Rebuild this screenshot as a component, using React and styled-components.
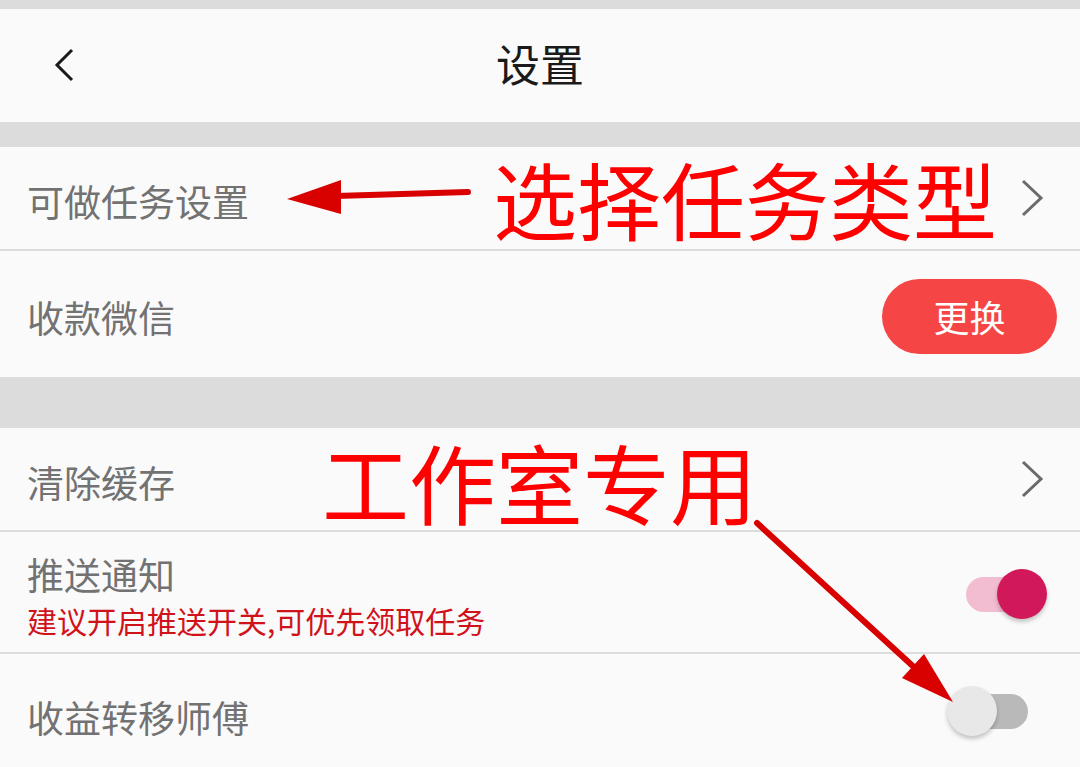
import React from 'react'
import styled, { createGlobalStyle, css } from 'styled-components'

const GlobalStyle = createGlobalStyle`
  html, body {
    margin: 0;
    padding: 0;
    background: #dcdcdc;
  }
  body {
    font-family: "Noto Sans CJK SC", "Noto Sans", sans-serif;
    overflow: hidden;
  }
`

const Page = styled.div`
  position: relative;
  width: 1080px;
  height: 767px;
  overflow: hidden;
  background: #dcdcdc;
  padding-top: 9px;
  box-sizing: border-box;
`
const Header = styled.div`
  height: 113px;
  background: #fafafa;
  display: flex;
  align-items: center;
  justify-content: center;
  position: relative;
`
const BackButton = styled.div`
  position: absolute;
  left: 52px;
  top: 38px;
  width: 26px;
  height: 36px;
`
const Title = styled.div`
  font-size: 44px;
  color: #1a1a1a;
  line-height: 1;
  margin-top: -6px;
`
const Gap = styled.div`
  height: ${props => props.h}px;
`
const Group = styled.div`
  background: #fafafa;
  display: flex;
  flex-direction: column;
`
const Row = styled.div`
  height: ${props => props.h}px;
  display: flex;
  align-items: center;
  justify-content: space-between;
  padding-left: 27px;
  padding-right: ${props => props.pr || 0}px;
  box-sizing: border-box;
  ${props => props.divider ? css`border-bottom: 2px solid #dcdcdc;` : ''}
`
const LabelBlock = styled.div`
  display: flex;
  flex-direction: column;
`
const Label = styled.div`
  font-size: 37px;
  line-height: 1;
  color: #727272;
  margin-top: 6px;
`
const Hint = styled.div`
  font-size: 30px;
  line-height: 1;
  color: #d0121b;
  margin-top: 12px;
`
const Chevron = styled.svg`
  width: 24px;
  height: 40px;
  display: block;
`
const ChangeButton = styled.div`
  width: 175px;
  height: 75px;
  border-radius: 38px;
  background: #f64545;
  color: #fff;
  font-size: 36px;
  display: flex;
  align-items: center;
  justify-content: center;
  margin-top: 4px;
`
const SwitchWrap = styled.div`
  position: relative;
  width: 86px;
  height: 50px;
  margin-top: ${props => props.mt || 0}px;
`
const Track = styled.div`
  position: absolute;
  left: 5px;
  right: 5px;
  top: 8px;
  height: 35px;
  border-radius: 18px;
  background: ${props => props.on ? '#f2bdd1' : '#b9b9b9'};
`
const Thumb = styled.div`
  position: absolute;
  top: 0;
  ${props => props.on ? 'right: 0;' : 'left: 0;'}
  width: 50px;
  height: 50px;
  border-radius: 50%;
  background: ${props => props.on ? '#d1185b' : '#e8e8e8'};
  box-shadow: 0 3px 4px rgba(0, 0, 0, 0.22);
`
const Note = styled.div`
  position: absolute;
  left: ${props => props.x}px;
  top: ${props => props.y}px;
  font-size: ${props => props.size}px;
  line-height: 1;
  color: #ff0000;
  white-space: nowrap;
  pointer-events: none;
`
const Arrows = styled.svg`
  position: absolute;
  left: 0;
  top: 0;
  width: 1080px;
  height: 767px;
  pointer-events: none;
`

function RightChevron() {
  return (
    <Chevron viewBox="0 0 24 40">
      <polyline points="3,3 21,20 3,37" fill="none" stroke="#6a6a6a" strokeWidth="3" />
    </Chevron>
  )
}

function Switch({ on, mt }) {
  return (
    <SwitchWrap mt={mt}>
      <Track on={on} />
      <Thumb on={on} />
    </SwitchWrap>
  )
}

export default function App() {
  return (
    <Page>
      <GlobalStyle />
      <Header>
        <BackButton>
          <svg width="26" height="36" viewBox="0 0 26 36">
            <polyline points="20,3 5,18 20,33" fill="none" stroke="#1a1a1a" strokeWidth="3" />
          </svg>
        </BackButton>
        <Title>设置</Title>
      </Header>
      <Gap h={25} />
      <Group>
        <Row h={104} pr={36} divider>
          <Label>可做任务设置</Label>
          <RightChevron />
        </Row>
        <Row h={126} pr={23}>
          <Label>收款微信</Label>
          <ChangeButton>更换</ChangeButton>
        </Row>
      </Group>
      <Gap h={51} />
      <Group>
        <Row h={104} pr={36} divider>
          <Label>清除缓存</Label>
          <RightChevron />
        </Row>
        <Row h={122} pr={33} divider>
          <LabelBlock>
            <Label>推送通知</Label>
            <Hint>建议开启推送开关,可优先领取任务</Hint>
          </LabelBlock>
          <Switch on mt={4} />
        </Row>
        <Row h={120} pr={47}>
          <Label>收益转移师傅</Label>
          <Switch mt={-6} />
        </Row>
      </Group>

      <Note x={493} y={156} size={84}>选择任务类型</Note>
      <Note x={322} y={438} size={87}>工作室专用</Note>
      <Arrows viewBox="0 0 1080 767">
        <line x1="468" y1="192" x2="336" y2="196" stroke="#d90000" strokeWidth="6" strokeLinecap="round" />
        <polygon points="287,199 341,180 341,214" fill="#d90000" />
        <line x1="757" y1="523" x2="916" y2="669" stroke="#d90000" strokeWidth="6" strokeLinecap="round" />
        <polygon points="953,702 902,678 924,654" fill="#d90000" />
      </Arrows>
    </Page>
  )
}
